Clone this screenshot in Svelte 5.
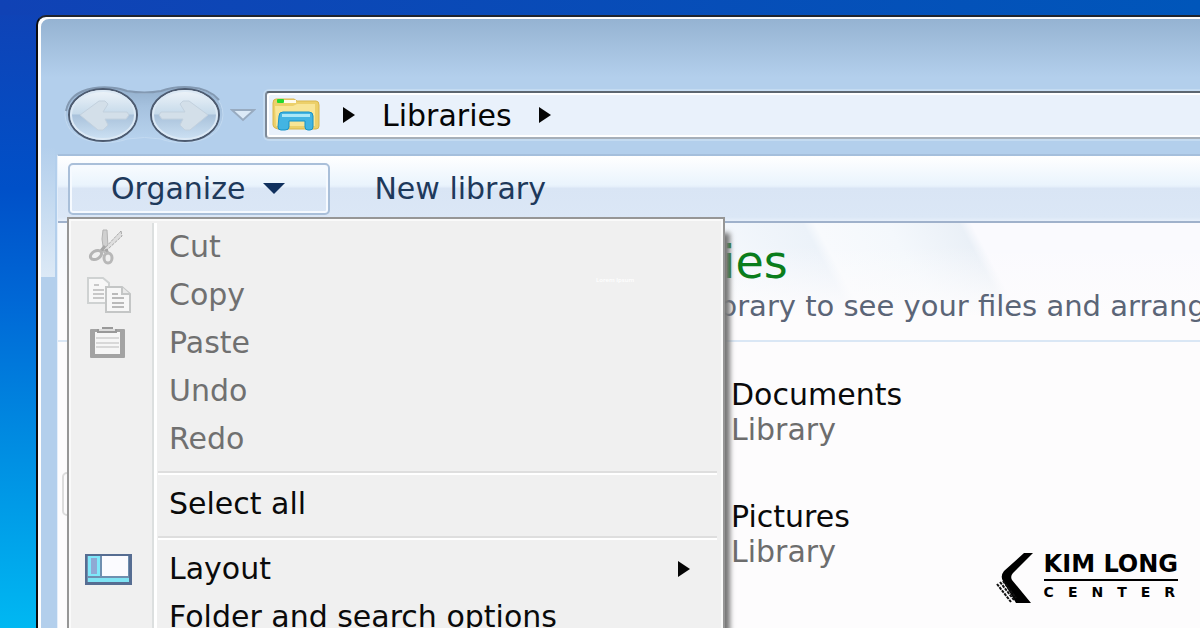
<script>
  const menu = [
    [
      { label: 'Cut', icon: 'cut', disabled: true },
      { label: 'Copy', icon: 'copy', disabled: true },
      { label: 'Paste', icon: 'paste', disabled: true },
      { label: 'Undo', disabled: true },
      { label: 'Redo', disabled: true }
    ],
    [{ label: 'Select all' }],
    [
      { label: 'Layout', icon: 'layout', submenu: true },
      { label: 'Folder and search options' }
    ]
  ]

  const libraries = ['Documents', 'Pictures']

  let open = $state(true)
</script>

{#snippet arrow()}
  <svg class="arrow" width="14" height="18" viewBox="0 0 14 18" aria-hidden="true">
    <path d="M1 1 L13 9 L1 17Z" fill="#050505" />
  </svg>
{/snippet}

{#snippet menuIcon(name)}
  {#if name === 'cut'}
    <svg width="48" height="40" viewBox="0 0 48 40" fill="none">
      <path d="M19 3 L23 3 L24 20 L20 26 L18 12Z" fill="#d0d0d0" stroke="#b4b4b4" />
      <path d="M37 4 L38 9 L23 23 L18 24Z" fill="#dedede" stroke="#a8a8a8" stroke-dasharray="3 1" />
      <path d="M21 19 L16 25 M22 22 L24 27" stroke="#a6a6a6" stroke-width="3" />
      <ellipse cx="12" cy="28" rx="6" ry="4" stroke="#b4b4b4" stroke-width="3" transform="rotate(-30 12 28)" />
      <ellipse cx="24" cy="31" rx="4" ry="5" stroke="#b8b8b8" stroke-width="3" />
    </svg>
  {:else if name === 'copy'}
    <svg width="48" height="40" viewBox="0 0 48 40">
      <path d="M4 3 H19 L25 8 V28 H4Z" fill="#f7f7f7" stroke="#cfd2d2" stroke-width="2" />
      <path d="M10 10 H15 M9 15 H20 M9 19 H20 M9 23 H20" stroke="#c8c8c8" stroke-width="2" />
      <path d="M22 12 H38 L46 19 V37 H22Z" fill="#f7f7f7" stroke="#c4c6c6" stroke-width="2" />
      <path d="M38 12 V19 H46" fill="#e9e9e9" stroke="#c4c6c6" stroke-width="2" />
      <path d="M28 19 H34 M28 23 H40 M28 28 H40 M28 32 H40" stroke="#bababa" stroke-width="2" />
    </svg>
  {:else if name === 'paste'}
    <svg width="48" height="40" viewBox="0 0 48 40">
      <rect x="6" y="6" width="35" height="29" rx="1" fill="#a3a3a3" />
      <rect x="11" y="9" width="25" height="22" fill="#f6f6f6" />
      <path d="M12 15 H35 M12 20 H35 M12 24 H35" stroke="#d8d8d8" stroke-width="2" />
      <path d="M18 4 H29 V6 H33 V10 H13 V6 H18Z" fill="#999" />
      <path d="M15 7 H31" stroke="#dcdcdc" stroke-width="2" />
    </svg>
  {:else if name === 'layout'}
    <svg width="48" height="40" viewBox="0 0 48 40">
      <rect x="1" y="5" width="47" height="31" fill="#566d92" />
      <rect x="3" y="7" width="42" height="26" fill="#6f8fb0" />
      <rect x="4" y="7" width="12" height="20" fill="#7fe8fa" />
      <rect x="7" y="9" width="6" height="16" fill="#8fa9d4" />
      <rect x="18" y="7" width="26" height="20" fill="#fbfbff" />
      <rect x="4" y="29" width="41" height="4" fill="#7fe4f4" />
    </svg>
  {/if}
{/snippet}

<div class="desktop">
  <main class="window">
    <header class="titlebar"></header>

    <nav class="navbar">
      <div class="travel">
        <svg class="pod" width="162" height="60" viewBox="0 0 162 60" aria-hidden="true">
          <defs>
            <linearGradient id="pod" x2="0" y2="1">
              <stop offset="0" stop-color="#93afcc" />
              <stop offset=".35" stop-color="#a6c2df" />
              <stop offset="1" stop-color="#b9d4ef" />
            </linearGradient>
          </defs>
          <path d="M2 30 C2 -2 50 0 64 6 Q82 10 98 6 C112 0 160 -2 160 30 C158 62 112 60 98 54 Q82 51 64 54 C50 60 4 62 2 30Z" fill="url(#pod)" stroke="#c3daf1" />
          <path d="M3 26 C8 -2 50 0 64 6 Q82 9 98 6 C112 1 142 -2 156 15" fill="none" stroke="#8399b2" stroke-width="2" />
        </svg>
        <div class="travel-buttons">
          {#each ['Back', 'Forward'] as direction}
            <button class="round" aria-label={direction}>
              <svg class:flip={direction === 'Forward'} width="72" height="56" viewBox="0 0 72 56" aria-hidden="true">
                <defs>
                  <linearGradient id="glass-{direction}" x2="0" y2="1">
                    <stop offset="0" stop-color="#f0f5fa" />
                    <stop offset=".48" stop-color="#c6daea" />
                    <stop offset=".5" stop-color="#a9c2db" />
                    <stop offset="1" stop-color="#cfe3f5" />
                  </linearGradient>
                </defs>
                <ellipse cx="36" cy="28" rx="34" ry="26" fill="url(#glass-{direction})" stroke="#4d5b70" stroke-width="2" />
                <ellipse cx="36" cy="28" rx="32" ry="24" fill="none" stroke="#dce9f5" stroke-width="2" />
                <path d="M13 28 L32 14 H38 L41 17 L36 25 H60 L62 28 L59 32 H38 L41 38 L36 43 H31Z" fill="#d3dfe9" stroke="#c3d1de" />
              </svg>
            </button>
          {/each}
        </div>
      </div>

      <button class="recent" aria-label="Recent pages">
        <svg width="26" height="14" viewBox="0 0 26 14" aria-hidden="true">
          <path d="M2 2 H24 L13 12Z" fill="#dceaf7" stroke="#98abc0" stroke-width="2" />
        </svg>
      </button>

      <div class="address">
        <svg class="folder" width="48" height="36" viewBox="0 0 48 36" aria-hidden="true">
          <path d="M1 6 Q1 2 4 2 H22 L25 4 H44 Q47 4 47 8 V29 Q47 32 44 32 H6 Q1 31 1 28Z" fill="#ecd06a" stroke="#d9b64d" />
          <path d="M3 9 H21 L25 7 H43 V29 H4Z" fill="#f8e596" />
          <rect x="11" y="3" width="13" height="3" fill="#fffbea" />
          <rect x="5" y="2" width="7" height="4" rx="1" fill="#24d92b" />
          <path d="M7 19 Q7 15 11 15 H37 Q41 15 41 19 V30 Q41 33 38 33 H36 Q33 33 33 30 V24 H17 V30 Q17 33 13 33 H9 Q6 33 6 30Z" fill="#42b4e2" stroke="#1692c7" />
          <path d="M10 17 H38 V20 H10Z" fill="#a9e7f7" />
        </svg>
        {@render arrow()}
        <a href="#libraries">Libraries</a>
        {@render arrow()}
      </div>
    </nav>

    <div class="client">
      <div class="toolbar">
        <div class="dropdown">
          <button class="organize" aria-expanded={open} onclick={() => (open = !open)}>
            Organize
            <svg width="22" height="11" viewBox="0 0 22 11" aria-hidden="true">
              <path d="M0 0 H22 L11 11Z" fill="#10305e" />
            </svg>
          </button>

          {#if open}
            <div class="menu" role="menu">
              {#each menu as group}
                <div class="group">
                  {#each group as item}
                    <button class="item" role="menuitem" disabled={item.disabled}>
                      <span class="icon" aria-hidden="true">{@render menuIcon(item.icon)}</span>
                      <span class="label">{item.label}</span>
                      {#if item.submenu}{@render arrow()}{/if}
                    </button>
                  {/each}
                </div>
              {/each}
              <span class="caption">Lorem Ipsum</span>
            </div>
          {/if}
        </div>
        <button class="new">New library</button>
      </div>

      <section class="heading" id="libraries">
        <h1>Libraries</h1>
        <p>Open a library to see your files and arrange them by folder, date, and other properties.</p>
      </section>

      <div class="content">
        <aside><div class="selected"></div></aside>
        <ul>
          {#each libraries as name}
            <li>
              <strong>{name}</strong>
              <span>Library</span>
            </li>
          {/each}
        </ul>
      </div>
    </div>
  </main>

  <div class="brand">
    <svg width="42" height="52" viewBox="0 0 42 52" aria-hidden="true">
      <path d="M28 1 H37 L17 21 Q14 24 16 28 L35 51 H20 L7 29 Q4 24 8 19Z" fill="#000" />
      <path d="M1 32 L15 50 M4 30 L18 48 M7 29 L20 46" stroke="#111" stroke-width="2" stroke-dasharray="3 1" />
    </svg>
    <div class="brand-text">
      <b>KIM LONG</b>
      <span>CENTER</span>
    </div>
  </div>
</div>

<style>
  :global(body) {
    overflow: hidden;
  }

  .desktop {
    position: relative;
    box-sizing: border-box;
    height: 100vh;
    padding: 15px 0 0 36px;
    overflow: hidden;
    font-family: "DejaVu Sans", sans-serif;
    font-size: 30px;
    line-height: 35px;
    color: #0a0a0a;
    background:
      linear-gradient(90deg, #1042b5, #0056ba) top / 100% 15px no-repeat,
      linear-gradient(#1042b5, #0050c8 30%, #0068d6 48%, #0088e0 68%, #00b8f2);
  }

  button {
    padding: 0;
    border: 0;
    background: none;
    font: inherit;
    color: inherit;
    text-align: left;
  }

  svg {
    display: block;
    flex: none;
  }

  .window {
    box-sizing: border-box;
    display: flex;
    flex-direction: column;
    height: 100%;
    border-left: 2px solid #0b0b0e;
    border-top: 2px solid #20242c;
    border-top-left-radius: 10px;
    box-shadow: inset 3px 2px #fdfdfd;
    padding: 2px 0 0 3px;
    background:
      linear-gradient(#b3cfec, #dce9f6) 3px 130px / 14px 130px no-repeat,
      linear-gradient(#94b2d1, #b3cfec 60px);
  }

  .titlebar {
    flex: none;
    height: 66px;
  }

  .navbar {
    display: flex;
    flex: none;
    align-items: center;
    height: 60px;
    padding-left: 22px;
  }

  .travel {
    display: grid;
    align-items: center;
  }

  .travel > * {
    grid-area: 1 / 1;
  }

  .travel-buttons {
    display: flex;
    justify-content: center;
    gap: 10px;
  }

  .flip {
    transform: scaleX(-1);
  }

  .recent {
    margin: 0 9px 0 5px;
  }

  .address {
    display: flex;
    flex: 1;
    align-items: center;
    box-sizing: border-box;
    height: 48px;
    padding-left: 5px;
    border: 2px solid #7d8997;
    border-top-color: #5c6670;
    border-bottom-color: #a6afb9;
    border-right: 0;
    border-radius: 4px 0 0 4px;
    background: #e9f1fb;
    box-shadow: 0 0 0 2px #c4dbf1, inset 2px 2px #fff, inset 0 -2px #fff;
  }

  .address .arrow {
    margin: 0 26px 0 22px;
  }

  .address a {
    padding-right: 4px;
    color: #050505;
    text-decoration: none;
  }

  .client {
    display: flex;
    flex: 1;
    flex-direction: column;
    min-height: 0;
    margin: 9px 0 0 16px;
    border-left: 1px solid #e4eefa;
    border-top: 2px solid #a5bfdc;
    background: #fdfcfd;
  }

  .toolbar {
    display: flex;
    flex: none;
    align-items: center;
    box-sizing: border-box;
    height: 67px;
    padding: 0 10px;
    border-bottom: 2px solid #9fb1cb;
    background: linear-gradient(#fff, #eaf4fd 44%, #e4eefa 48%, #d9e5f5 49%, #dbe7f6 94%, #e6effa);
    color: #1e395b;
  }

  .dropdown {
    position: relative;
    z-index: 1;
  }

  .organize {
    display: flex;
    align-items: center;
    gap: 18px;
    box-sizing: border-box;
    height: 52px;
    padding: 0 43px 0 41px;
    border: 2px solid #a9bfd9;
    border-radius: 5px;
    box-shadow: inset 0 0 0 2px #f6faff;
  }

  .new {
    margin-left: 44px;
  }

  .menu {
    position: absolute;
    top: 54px;
    left: -1px;
    box-sizing: border-box;
    width: 658px;
    padding: 4px 6px 4px 2px;
    border: 2px solid #969696;
    background:
      linear-gradient(90deg, #dcdfdf 2px, #fff 2px) 83px 4px / 5px 100% no-repeat,
      #f0f0f0;
    box-shadow: inset 0 0 0 2px #fafafa, 5px 16px 5px #777;
    color: #0a0a0a;
  }

  .group + .group::before {
    content: "";
    display: block;
    height: 2px;
    margin: 8px 0 5px 87px;
    border-top: 2px solid #dedede;
    background: #fff;
  }

  .item {
    display: flex;
    align-items: center;
    width: 100%;
    height: 48px;
    padding-right: 26px;
  }

  .item:disabled {
    color: #707070;
  }

  .item .arrow {
    margin-left: auto;
  }

  .icon {
    width: 85px;
    padding-left: 13px;
    box-sizing: border-box;
  }

  .label {
    padding-left: 13px;
  }

  .caption {
    position: absolute;
    top: 57px;
    left: 527px;
    font: 600 6px/8px "Open Sans", sans-serif;
    color: #fff;
  }

  .heading {
    box-sizing: border-box;
    flex: none;
    height: 119px;
    padding: 12px 0 0 531px;
    border-bottom: 2px solid #dae7f5;
    overflow: hidden;
    white-space: nowrap;
    background:
      linear-gradient(180deg, transparent 20%, #fdfcfd 80%),
      linear-gradient(62deg, #f6f9fd 57%, #ecf2f9 67%, #f8fafd 68%, #f4f8fc 74%, #eaf0f7 80%, #fafafe 81%);
  }

  h1 {
    margin: 0;
    font-size: 46px;
    font-weight: 400;
    line-height: 54px;
    color: #0a7d1c;
  }

  p {
    margin: 0;
    font-size: 29px;
    color: #5b6577;
  }

  .content {
    display: grid;
    grid-template-columns: 673px 1fr;
  }

  aside {
    padding: 130px 24px 0 4px;
  }

  .selected {
    height: 40px;
    border: 2px solid #dcdcdc;
    border-radius: 5px;
  }

  ul {
    display: flex;
    flex-direction: column;
    gap: 52px;
    margin: 0;
    padding: 35px 0 0;
    list-style: none;
  }

  li {
    display: flex;
    flex-direction: column;
  }

  strong {
    font-weight: 400;
  }

  li span {
    color: #6d6d6d;
  }

  .brand {
    position: absolute;
    right: 22px;
    bottom: 24px;
    display: flex;
    gap: 6px;
    color: #000;
  }

  .brand-text {
    display: flex;
    flex-direction: column;
    font-weight: 700;
  }

  .brand b {
    padding-bottom: 3px;
    border-bottom: 2px solid #000;
    font-size: 24px;
    line-height: 24px;
  }

  .brand span {
    margin-right: -14px;
    font-size: 14px;
    line-height: 22px;
    letter-spacing: 14px;
  }
</style>
